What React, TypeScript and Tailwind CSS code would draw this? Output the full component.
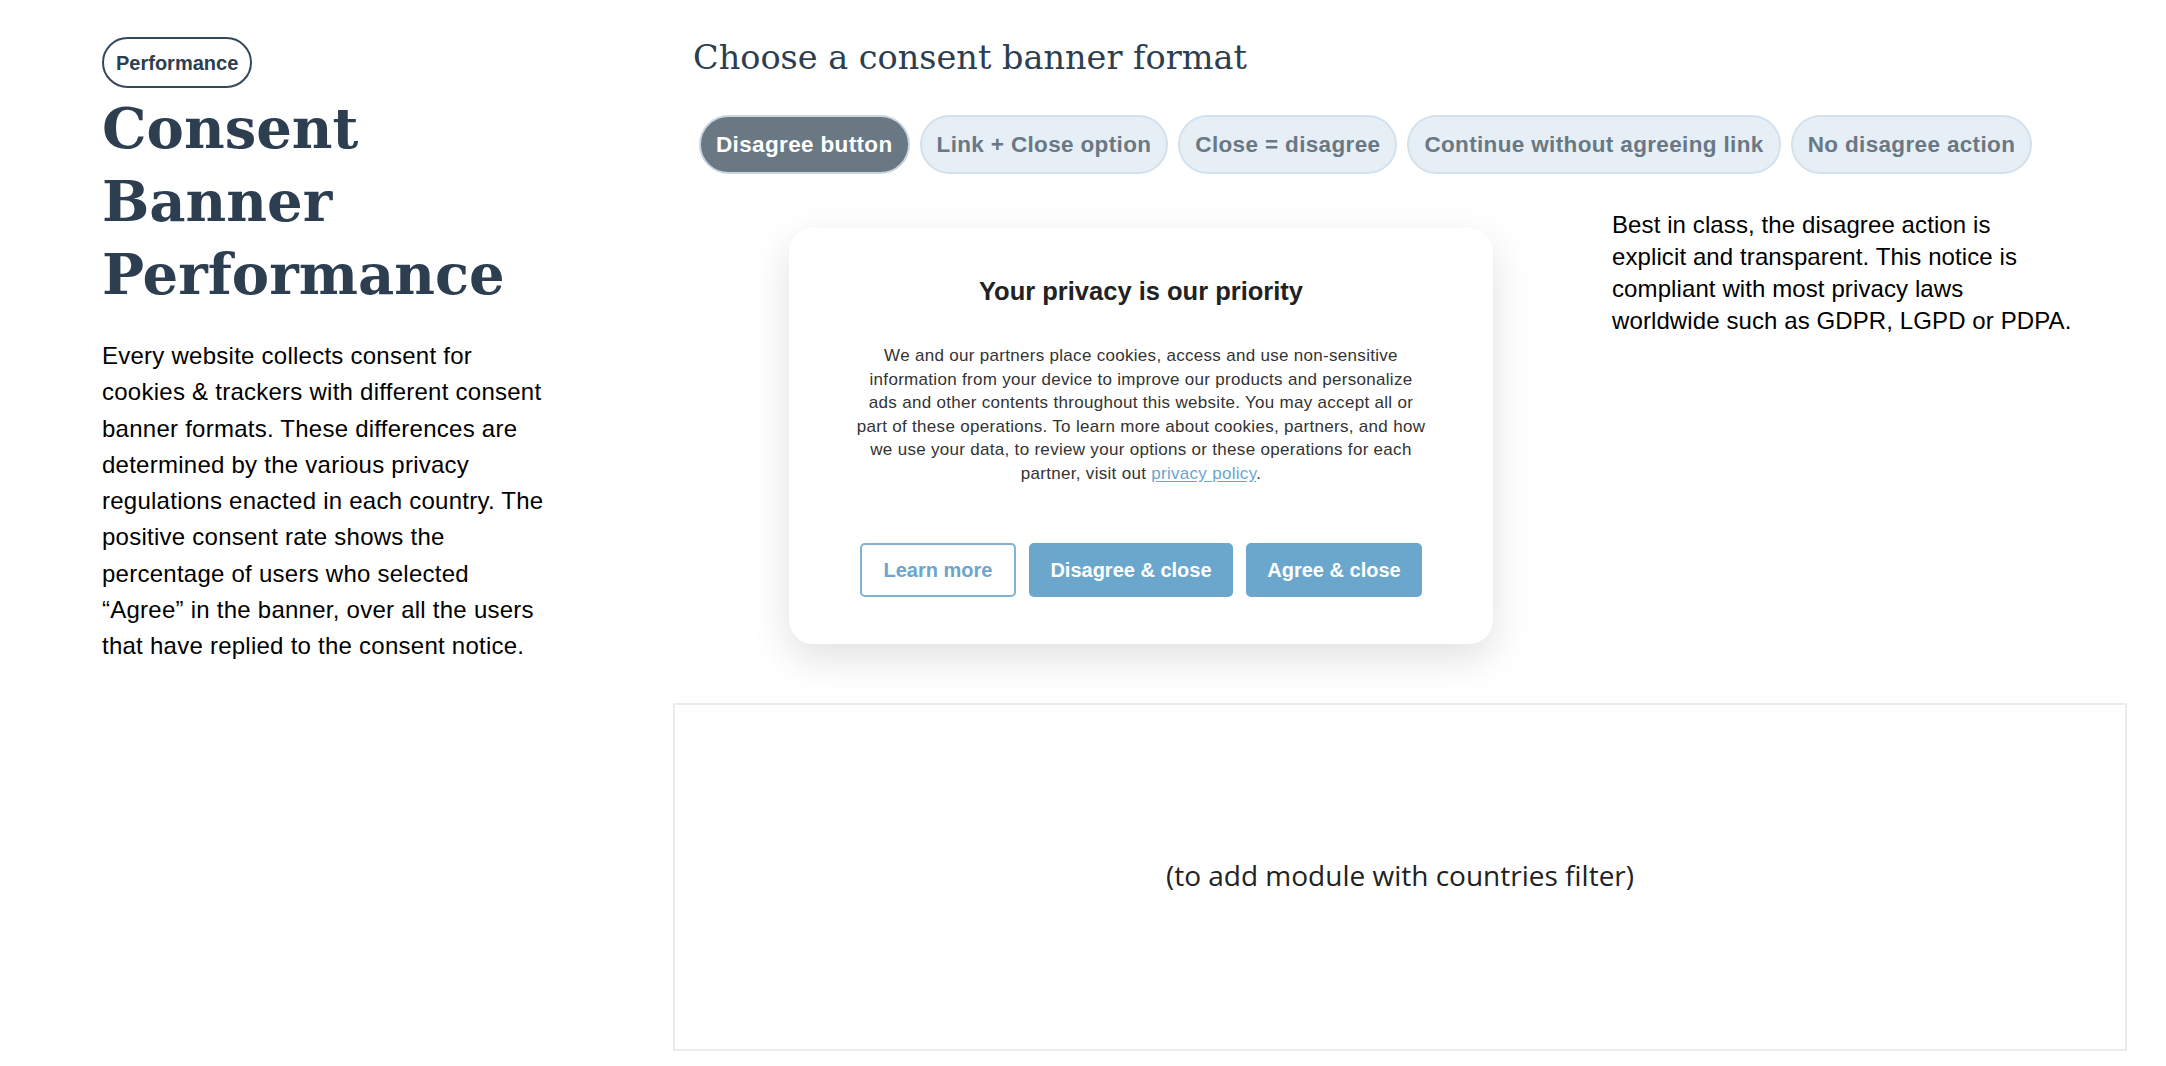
import { Fragment, useState } from 'react';

const SANS = 'font-["Liberation_Sans",Arial,sans-serif]';
const SERIF = 'font-["DejaVu_Serif",Georgia,serif]';

const FORMATS: { id: string; label: string; note: string[] }[] = [
  {
    id: 'disagree-button',
    label: 'Disagree button',
    note: [
      'Best in class, the disagree action is',
      'explicit and transparent. This notice is',
      'compliant with most privacy laws',
      'worldwide such as GDPR, LGPD or PDPA.',
    ],
  },
  { id: 'link-close', label: 'Link + Close option', note: [] },
  { id: 'close-disagree', label: 'Close = disagree', note: [] },
  { id: 'continue-link', label: 'Continue without agreeing link', note: [] },
  { id: 'no-disagree', label: 'No disagree action', note: [] },
];

const NOTICE_LINES = [
  'We and our partners place cookies, access and use non-sensitive',
  'information from your device to improve our products and personalize',
  'ads and other contents throughout this website. You may accept all or',
  'part of these operations. To learn more about cookies, partners, and how',
  'we use your data, to review your options or these operations for each',
];

function ConsentCard() {
  return (
    <div className="mt-[19px] w-[704px] shrink-0 rounded-[24px] bg-white px-[40px] pt-[46px] pb-[47px] shadow-[0_14px_40px_rgba(0,0,0,0.12)]">
      <h2 className="text-center text-[25.5px] leading-[34px] font-bold text-[#222]">Your privacy is our priority</h2>
      <p className="mt-[36px] text-center text-[17px] leading-[23.5px] tracking-[0.3px] text-[#333]">
        {NOTICE_LINES.map((line) => (
          <Fragment key={line}>
            {line}
            <br />
          </Fragment>
        ))}
        partner, visit out{' '}
        <a href="#" className="text-[#6aa6cd] underline underline-offset-2">
          privacy policy
        </a>
        .
      </p>
      <div className="mt-[58px] flex justify-center gap-[13px]">
        <button
          type="button"
          className="h-[54px] w-[156px] rounded-[5px] border-2 border-[#7eb3d6] bg-white text-[20px] font-semibold text-[#6aa6cd]"
        >
          Learn more
        </button>
        <button
          type="button"
          className="h-[54px] w-[204px] rounded-[5px] bg-[#6ba7cd] text-[20px] font-semibold text-white"
        >
          Disagree &amp; close
        </button>
        <button
          type="button"
          className="h-[54px] w-[176px] rounded-[5px] bg-[#6ba7cd] text-[20px] font-semibold text-white"
        >
          Agree &amp; close
        </button>
      </div>
    </div>
  );
}

export default function App() {
  const [format, setFormat] = useState('disagree-button');
  const active = FORMATS.find((f) => f.id === format) ?? FORMATS[0];

  return (
    <div className={`flex min-h-[1066px] bg-white pl-[102px] pr-[39px] text-black ${SANS}`}>
      <aside className="w-[571px] shrink-0 pt-[37px]">
        <span className="inline-flex h-[51px] items-center rounded-full border-2 border-[#34495e] px-[12px] text-[20px] font-bold text-[#2c3e50]">
          Performance
        </span>
        <h1 className={`mt-[4px] text-[56px] leading-[73px] font-bold text-[#2c3e50] ${SERIF}`}>
          Consent
          <br />
          Banner
          <br />
          Performance
        </h1>
        <p className="mt-[27px] w-[450px] text-[24px] leading-[36.3px] tracking-[0.25px]">
          Every website collects consent for cookies &amp; trackers with different consent banner formats. These
          differences are determined by the various privacy regulations enacted in each country. The positive consent
          rate shows the percentage of users who selected “Agree” in the banner, over all the users that have replied to
          the consent notice.
        </p>
      </aside>

      <main className="flex-1 pt-[36px]">
        <h2 className={`px-5 text-[33.5px] leading-[44px] font-light text-[#2c3e50] ${SERIF}`}>
          Choose a consent banner format
        </h2>

        <div className="mt-[35px] flex gap-[10px] pl-[26px]" role="tablist">
          {FORMATS.map((f) => (
            <button
              key={f.id}
              type="button"
              role="tab"
              aria-selected={format === f.id}
              onClick={() => setFormat(f.id)}
              className={`h-[59px] rounded-full border-2 px-[15px] text-[22.5px] font-semibold tracking-[0.35px] ${
                format === f.id
                  ? 'border-[#c9d6e0] bg-[#6a7884] text-white'
                  : 'border-[#d3e1ec] bg-[#e6eff6] text-[#6a7884]'
              }`}
            >
              {f.label}
            </button>
          ))}
        </div>

        <div className="mt-[35px] flex items-start pl-[116px]">
          <ConsentCard />
          <p className="ml-[119px] w-[480px] text-[24px] leading-[32px] tracking-[0.1px]">
            {active.note.map((line) => (
              <Fragment key={line}>
                {line}
                <br />
              </Fragment>
            ))}
          </p>
        </div>

        <div className="mt-[59px] flex h-[348px] items-center justify-center border-2 border-[#ebebeb] pb-[5px]">
          <span className="font-['Open_Sans',sans-serif] text-[28px] text-[#222]">
            (to add module with countries filter)
          </span>
        </div>
      </main>
    </div>
  );
}
